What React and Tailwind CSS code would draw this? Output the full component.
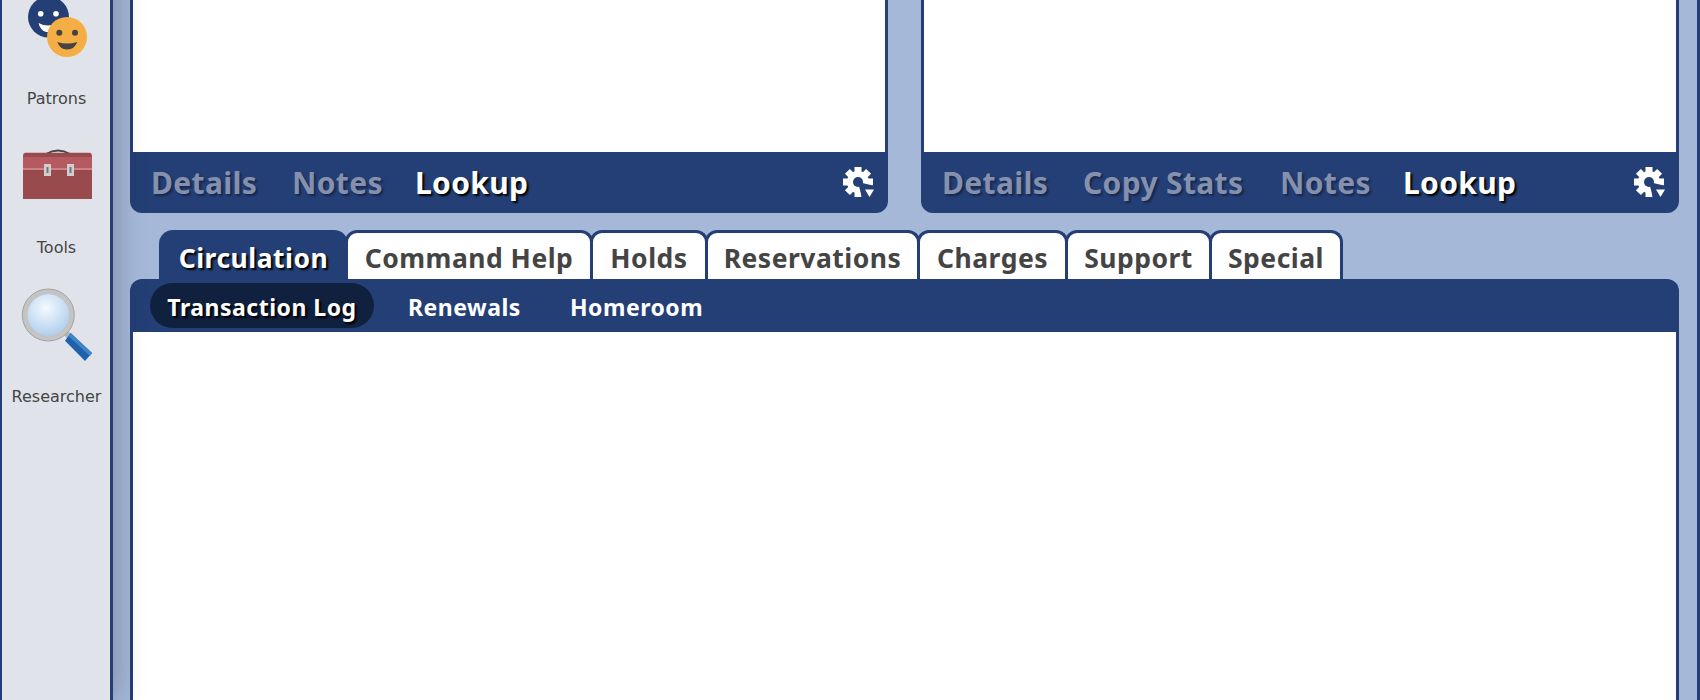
import React from 'react';

const PatronsIcon = () => (
  <svg width="80" height="80" viewBox="0 0 80 80">
    <circle cx="31.5" cy="28" r="20.5" fill="#243f75" />
    <circle cx="23.7" cy="24.7" r="2.8" fill="#fff" />
    <circle cx="39" cy="24.7" r="2.8" fill="#fff" />
    <path d="M21.5 34 Q31 39 41 34 Q38 44 29 43 Q23 41 21.5 34Z" fill="#fff" />
    <circle cx="50" cy="48" r="20" fill="#f5ae43" />
    <circle cx="42.3" cy="43.7" r="3" fill="#444" />
    <circle cx="58" cy="43.7" r="3" fill="#444" />
    <path d="M40.3 53 Q50 56 60.3 53 Q57.5 60.5 50 60.5 Q43 60.5 40.3 53Z" fill="#444" />
  </svg>
);

const ToolsIcon = () => (
  <svg width="80" height="80" viewBox="0 0 80 80">
    <path d="M29 16 Q41 9 53 16" fill="none" stroke="#444" strokeWidth="2" />
    <path d="M8 14.7 H73 Q75 15 75 18 V61 H6 V18 Q6 15 8 14.7Z" fill="#984a4c" />
    <rect x="6" y="19" width="69" height="11" fill="#b55a60" />
    <rect x="6" y="30" width="69" height="2" fill="#c98488" />
    <rect x="27" y="26" width="7" height="12" fill="#cfcfcf" />
    <rect x="50" y="26" width="7" height="12" fill="#cfcfcf" />
    <rect x="29.5" y="29" width="2" height="6" fill="#777" />
    <rect x="52.5" y="29" width="2" height="6" fill="#777" />
  </svg>
);

const ResearcherIcon = () => (
  <svg width="80" height="80" viewBox="0 0 80 80">
    <defs>
      <radialGradient id="lens" cx="0.45" cy="0.35" r="0.7">
        <stop offset="0" stopColor="#f4f9fe" />
        <stop offset="0.6" stopColor="#c5dcf3" />
        <stop offset="1" stopColor="#a4c6e8" />
      </radialGradient>
    </defs>
    <line x1="47" y1="44" x2="53" y2="50" stroke="#b5b5b5" strokeWidth="6" />
    <path d="M48 53.7 L53.7 46 L75 66 L68 74Z" fill="#1f62ab" />
    <path d="M53.7 46 L75 66 L73 69 L51.5 49Z" fill="#3f86c9" />
    <circle cx="31.3" cy="28" r="23.5" fill="url(#lens)" stroke="#c4c4c4" strokeWidth="5.5" />
    <circle cx="31.3" cy="28" r="26" fill="none" stroke="#9b9b9b" strokeWidth="0.8" />
  </svg>
);

const GearIcon = () => (
  <svg width="32" height="31" viewBox="0 0 32 31">
    <g fill="#fff">
      <rect x="11.5" y="0" width="7" height="30" />
      <rect x="0" y="11.5" width="30" height="7" />
      <rect x="11.5" y="0" width="7" height="30" transform="rotate(45 15 15)" />
      <rect x="11.5" y="0" width="7" height="30" transform="rotate(-45 15 15)" />
    </g>
    <circle cx="15" cy="15" r="11" fill="#fff" />
    <circle cx="15" cy="15" r="5" fill="#243f75" />
    <path d="M15 15 L32 19 L32 31 L19 31Z" fill="#243f75" />
    <path d="M22 22.5 H31 L26.5 30Z" fill="#fff" />
  </svg>
);

const FooterTab = ({ label, active, className }) => (
  <span
    className={`${className} ${
      active
        ? 'text-white [text-shadow:2px_2px_2px_#000]'
        : 'text-[#8490ad] [text-shadow:2px_2px_2px_#16284e]'
    }`}
  >
    {label}
  </span>
);

const Panel = ({ tabs }) => (
  <div className="flex h-[213px] flex-col">
    <div className="flex-1 border-x-[3px] border-[#243f75] bg-white" />
    <div className="flex h-[61px] items-center justify-between rounded-b-[12px] bg-[#243f75] pl-[21px] pr-[13px]">
      <div className="flex pt-[1px] text-[30px] font-bold leading-none tracking-[0.35px]">
        {tabs.map(([t, w]) => (
          <FooterTab key={t} label={t} active={t === 'Lookup'} className={w} />
        ))}
      </div>
      <GearIcon />
    </div>
  </div>
);

const tabClass =
  'ml-[-3px] flex h-[49px] items-center justify-center rounded-t-[12px] border-x-[3px] border-t-[3px] border-[#243f75] bg-white pt-[4px] text-[#444]';

export default function App() {
  return (
    <div className="flex h-[700px] w-full overflow-hidden bg-[#a5b8d8] font-['Noto_Sans',sans-serif]">
      <aside className="relative z-10 -mt-[41px] h-[741px] w-[113px] shrink-0 border-x-[3px] border-l-[2px] border-[#243f75] bg-[#e0e4ea] font-['DejaVu_Sans',sans-serif] shadow-[0_0_30px_rgba(0,0,0,0.28)]">
        {[
          ['Patrons', <PatronsIcon />],
          ['Tools', <ToolsIcon />],
          ['Researcher', <ResearcherIcon />],
        ].map(([label, icon]) => (
          <div key={label} className="flex h-[149px] flex-col items-center pt-[30px]">
            <div className="ml-[2px]">{icon}</div>
            <div className="ml-[1px] mt-[20px] text-[16px] leading-[20px] text-[#444]">{label}</div>
          </div>
        ))}
      </aside>
      <main className="flex flex-1 flex-col pl-[17px] pr-[18px]">
        <div className="grid h-[213px] grid-cols-2 gap-[33px]">
          <Panel tabs={[['Details', 'w-[141px]'], ['Notes', 'w-[123px]'], ['Lookup', 'w-[112px]']]} />
          <Panel tabs={[['Details', 'w-[141px]'], ['Copy Stats', 'w-[197px]'], ['Notes', 'w-[123px]'], ['Lookup', 'w-[112px]']]} />
        </div>
        <div className="mt-[17px] flex pl-[29px] text-[26.5px] font-bold leading-none tracking-[0.5px]">
          <div className="flex h-[49px] w-[189px] items-center justify-center rounded-t-[14px] bg-[#243f75] pt-[7px] text-white [text-shadow:2px_2px_2px_#000]">
            Circulation
          </div>
          <div className={`${tabClass} w-[248px]`}>Command Help</div>
          <div className={`${tabClass} w-[118px]`}>Holds</div>
          <div className={`${tabClass} w-[215px]`}>Reservations</div>
          <div className={`${tabClass} w-[151px]`}>Charges</div>
          <div className={`${tabClass} w-[147px]`}>Support</div>
          <div className={`${tabClass} w-[134px]`}>Special</div>
        </div>
        <div className="flex h-[53px] items-center rounded-t-[12px] bg-[#243f75] pl-[20px] text-[23px] font-bold leading-none tracking-[0.5px] text-white">
          <div className="flex h-[45px] w-[224px] items-center justify-center rounded-full bg-[#10203f] pt-[4px] [text-shadow:2px_2px_2px_#000]">
            Transaction Log
          </div>
          <div className="ml-[34px] w-[162px] pt-[4px]">Renewals</div>
          <div className="pt-[4px]">Homeroom</div>
        </div>
        <div className="flex-1 border-x-[3px] border-[#243f75] bg-white" />
      </main>
      <div className="h-[700px] w-[3px] shrink-0 bg-[#243f75]" />
    </div>
  );
}
